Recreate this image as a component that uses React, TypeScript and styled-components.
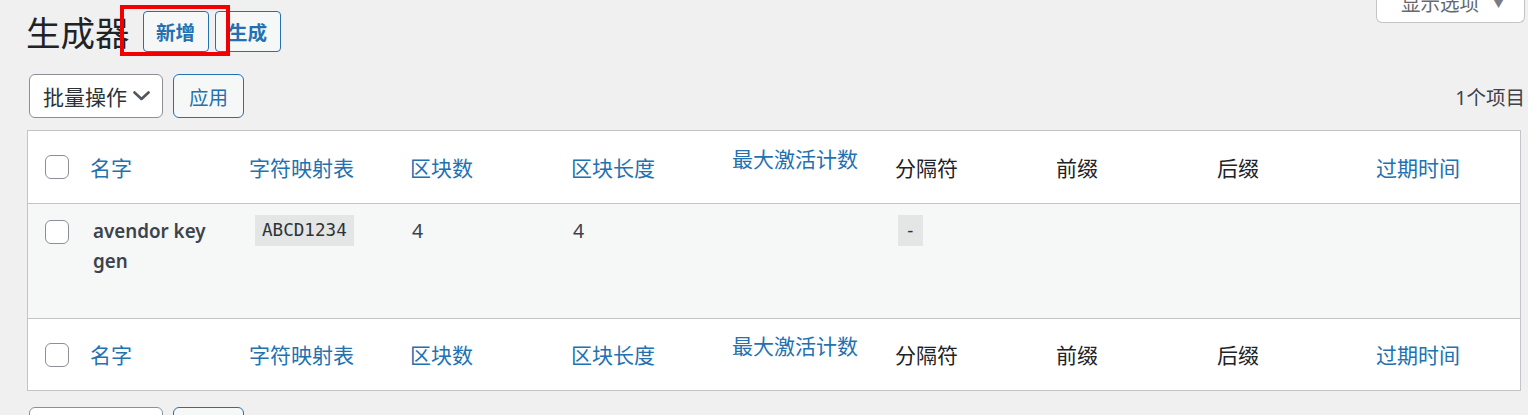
import React from "react";
import styled, { createGlobalStyle } from "styled-components";

const GlobalStyle = createGlobalStyle`
  html, body {
    margin: 0;
    padding: 0;
    background: #f0f0f1;
  }
  body {
    font-family: "Noto Sans", "Noto Sans CJK SC", sans-serif;
    color: #3c434a;
    overflow: hidden;
  }
  *, *::before, *::after {
    box-sizing: border-box;
  }
`;

const Page = styled.div`
  padding: 0 3px 0 27px;
`;

const TopBar = styled.div`
  display: flex;
  align-items: flex-start;
  justify-content: space-between;
  height: 63px;
`;

const TitleGroup = styled.div`
  display: flex;
  align-items: center;
  height: 63px;
  gap: 6px;
`;

const Title = styled.h1`
  margin: 0 7px 0 -1px;
  font-family: "Noto Sans CJK SC", sans-serif;
  font-size: 34.5px;
  font-weight: 400;
  line-height: 1.3;
  color: #1d2327;
`;

const ActionSlot = styled.span`
  position: relative;
  display: inline-flex;
`;

const Highlight = styled.span`
  position: absolute;
  left: -23px;
  top: -6px;
  width: 110px;
  height: 51px;
  border: 4px solid #f20000;
  pointer-events: none;
  z-index: 2;
`;

const TitleAction = styled.a`
  display: inline-flex;
  align-items: center;
  justify-content: center;
  height: 41px;
  width: 66px;
  border: 1px solid #2271b1;
  border-radius: 4px;
  background: #f6f7f7;
  color: #2271b1;
  font-family: "Noto Sans CJK SC", sans-serif;
  font-size: 19.5px;
  font-weight: 600;
  text-decoration: none;
  cursor: pointer;
`;

const ScreenTab = styled.button`
  margin-top: -17px;
  width: 149px;
  height: 40px;
  display: flex;
  align-items: center;
  justify-content: center;
  gap: 14px;
  border: 1px solid #c3c4c7;
  border-top: none;
  border-radius: 0 0 6px 6px;
  background: #fff;
  color: #646970;
  font-family: "Noto Sans CJK SC", sans-serif;
  font-size: 19.5px;
  padding: 0 0 0 4px;
`;

const Caret = styled.span`
  font-size: 11px;
  color: #787c82;
`;

const TableNav = styled.div<{ $top?: boolean }>`
  display: flex;
  align-items: center;
  gap: 10px;
  height: 44px;
  margin: ${(p) => (p.$top ? "11px 0 12px" : "16px 0 0")};
`;

const BulkSelect = styled.div`
  margin-left: 2px;
  width: 134px;
  height: 44px;
  display: flex;
  align-items: center;
  justify-content: space-between;
  padding: 0 12px 0 13px;
  border: 1px solid #8c8f94;
  border-radius: 6px;
  background: #fff;
  color: #2c3338;
  font-family: "Noto Sans CJK SC", sans-serif;
  font-size: 21px;
`;

const ApplyButton = styled.button`
  width: 71px;
  height: 44px;
  border: 1px solid #2271b1;
  border-radius: 6px;
  background: #f6f7f7;
  color: #2271b1;
  font-family: "Noto Sans CJK SC", sans-serif;
  font-size: 19.5px;
  padding: 0;
`;

const ItemCount = styled.span`
  margin-left: auto;
  font-size: 19.5px;
  color: #3c434a;
`;

const TableBox = styled.div`
  margin-right: 4px;
  border: 1px solid #c3c4c7;
  background: #fff;
`;

const columns = "52px repeat(8, 161px) 1fr";

const HeadRow = styled.div<{ $foot?: boolean }>`
  display: grid;
  grid-template-columns: ${columns};
  align-items: center;
  height: ${(p) => (p.$foot ? "72px" : "73px")};
  background: #fff;
  border-bottom: ${(p) => (p.$foot ? "none" : "1px solid #c3c4c7")};
  border-top: ${(p) => (p.$foot ? "1px solid #c3c4c7" : "none")};
`;

const HeadCell = styled.div<{ $pad: number; $link?: boolean; $raised?: boolean }>`
  padding-left: ${(p) => p.$pad}px;
  padding-bottom: ${(p) => (p.$raised ? "18px" : "0")};
  font-family: "Noto Sans CJK SC", sans-serif;
  font-size: 21px;
  line-height: 29px;
  color: ${(p) => (p.$link ? "#2271b1" : "#1d2327")};
  white-space: nowrap;
`;

const CheckCell = styled.div<{ $top?: number }>`
  padding-left: 17px;
  padding-top: ${(p) => p.$top ?? 0}px;
`;

const Checkbox = styled.span`
  display: block;
  width: 24px;
  height: 24px;
  border: 1px solid #8c8f94;
  border-radius: 6px;
  background: #fff;
`;

const BodyRow = styled.div`
  display: grid;
  grid-template-columns: ${columns};
  align-items: start;
  height: 114px;
  background: #f6f7f7;
`;

const BodyCell = styled.div<{ $pad: number }>`
  padding: 12px 12px 0 ${(p) => p.$pad}px;
  font-size: 19.5px;
  line-height: 29px;
  color: #3c434a;
`;

const RowTitle = styled.strong`
  font-size: 18.8px;
  font-weight: 600;
  color: #3c434a;
`;

const Code = styled.code`
  display: inline-block;
  vertical-align: top;
  margin-top: -1px;
  padding: 4px 7px;
  background: rgba(0, 0, 0, 0.07);
  font-family: "DejaVu Sans Mono", "Liberation Mono", monospace;
  font-size: 17.6px;
  line-height: 23px;
  color: #2c3338;
`;

type Column = { label: string; pad: number; link?: boolean; raised?: boolean };

const headColumns: Column[] = [
  { label: "名字", pad: 10, link: true },
  { label: "字符映射表", pad: 8, link: true },
  { label: "区块数", pad: 8, link: true },
  { label: "区块长度", pad: 8, link: true },
  { label: "最大激活计数", pad: 8, link: true, raised: true },
  { label: "分隔符", pad: 10 },
  { label: "前缀", pad: 10 },
  { label: "后缀", pad: 10 },
  { label: "过期时间", pad: 8, link: true },
];

const Chevron = () => (
  <svg width="17" height="10" viewBox="0 0 17 10" aria-hidden="true">
    <path d="M1.5 1.5 L8.5 8 L15.5 1.5" fill="none" stroke="#50575e" strokeWidth="2.6" strokeLinecap="round" strokeLinejoin="round" />
  </svg>
);

const HeaderRow = ({ foot }: { foot?: boolean }) => (
  <HeadRow $foot={foot}>
    <CheckCell>
      <Checkbox />
    </CheckCell>
    {headColumns.map((c) => (
      <HeadCell key={c.label} $pad={c.pad} $link={c.link} $raised={c.raised}>
        {c.label}
      </HeadCell>
    ))}
  </HeadRow>
);

const BulkActions = ({ top }: { top?: boolean }) => (
  <TableNav $top={top}>
    <BulkSelect>
      <span>批量操作</span>
      <Chevron />
    </BulkSelect>
    <ApplyButton>应用</ApplyButton>
    {top && <ItemCount>1个项目</ItemCount>}
  </TableNav>
);

export default function App() {
  return (
    <>
      <GlobalStyle />
      <Page>
        <TopBar>
          <TitleGroup>
            <Title>生成器</Title>
            <ActionSlot>
              <TitleAction>新增</TitleAction>
              <Highlight />
            </ActionSlot>
            <TitleAction>生成</TitleAction>
          </TitleGroup>
          <ScreenTab>
            <span>显示选项</span>
            <Caret>▼</Caret>
          </ScreenTab>
        </TopBar>

        <BulkActions top />

        <TableBox>
          <HeaderRow />
          <BodyRow>
            <CheckCell $top={16}>
              <Checkbox />
            </CheckCell>
            <BodyCell $pad={13}>
              <RowTitle>avendor key gen</RowTitle>
            </BodyCell>
            <BodyCell $pad={14}>
              <Code>ABCD1234</Code>
            </BodyCell>
            <BodyCell $pad={10}>4</BodyCell>
            <BodyCell $pad={10}>4</BodyCell>
            <BodyCell $pad={10} />
            <BodyCell $pad={13}>
              <Code>-</Code>
            </BodyCell>
            <BodyCell $pad={10} />
            <BodyCell $pad={10} />
            <BodyCell $pad={10} />
          </BodyRow>
          <HeaderRow foot />
        </TableBox>

        <BulkActions />
      </Page>
    </>
  );
}
